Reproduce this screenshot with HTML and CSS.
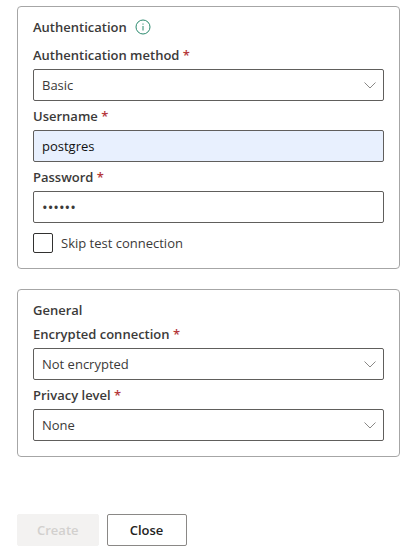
FILE: index.html
```html
<!DOCTYPE html>
<html lang="en">
<head>
  <meta charset="UTF-8">
  <meta name="viewport" content="width=device-width, initial-scale=1.0">
  <title>Connection</title>
  <link rel="stylesheet" href="styles.css">
</head>
<body>
  <form class="connection-form">
    <section class="card">
      <div class="card-header with-info">
        <h2>Authentication</h2>
        <svg class="info-icon" viewBox="0 0 16 16" aria-hidden="true">
          <circle cx="8" cy="8" r="7"/>
          <path d="M8 7v4.5M8 4.5v1.2"/>
        </svg>
      </div>

      <label class="field-label" for="authMethod">Authentication method <span class="required">*</span></label>
      <div class="select-box">
        <select class="field" id="authMethod">
          <option>Basic</option>
        </select>
        <svg class="chevron" viewBox="0 0 12 7" aria-hidden="true"><path d="M0.5 0.5L6 6L11.5 0.5"/></svg>
      </div>

      <label class="field-label" for="username">Username <span class="required">*</span></label>
      <input class="field filled" type="text" id="username" value="postgres">

      <label class="field-label" for="password">Password <span class="required">*</span></label>
      <input class="field password" type="password" id="password" value="secret">

      <div class="check-row">
        <input class="checkbox" type="checkbox" id="skipTest">
        <label for="skipTest">Skip test connection</label>
      </div>
    </section>

    <section class="card">
      <div class="card-header">
        <h2>General</h2>
      </div>

      <label class="field-label" for="encrypted">Encrypted connection <span class="required">*</span></label>
      <div class="select-box">
        <select class="field" id="encrypted">
          <option>Not encrypted</option>
        </select>
        <svg class="chevron" viewBox="0 0 12 7" aria-hidden="true"><path d="M0.5 0.5L6 6L11.5 0.5"/></svg>
      </div>

      <label class="field-label" for="privacy">Privacy level <span class="required">*</span></label>
      <div class="select-box">
        <select class="field" id="privacy">
          <option>None</option>
        </select>
        <svg class="chevron" viewBox="0 0 12 7" aria-hidden="true"><path d="M0.5 0.5L6 6L11.5 0.5"/></svg>
      </div>
    </section>

    <div class="actions">
      <button class="button create" type="submit" disabled>Create</button>
      <button class="button close" type="button">Close</button>
    </div>
  </form>
</body>
</html>
```

FILE: styles.css
```css
* {
  box-sizing: border-box;
}

body {
  margin: 0;
  background-color: #fff;
  color: #3b3a39;
  font-family: "Segoe UI", "Open Sans", "Noto Sans", sans-serif;
  font-size: 13px;
}

.connection-form {
  padding: 6px 2px 2px 17px;
}

.card {
  padding: 10px 15px 15px;
  margin-bottom: 20px;
  border: 1px solid #a6a6a6;
  border-radius: 4px;
}

.card-header {
  display: flex;
  align-items: center;
  gap: 8px;
  height: 19px;
}

.with-info {
  margin-bottom: 4px;
}

.card-header h2 {
  margin: 0;
  font-size: 13px;
  font-weight: 600;
}

.info-icon {
  width: 16px;
  height: 16px;
  fill: none;
  stroke: #2b8a6e;
}

.field-label {
  display: block;
  padding-top: 2px;
  line-height: 27px;
  font-weight: 600;
}

.required {
  color: #b5373b;
}

.field {
  display: block;
  width: 100%;
  height: 32px;
  padding: 0 8px;
  border: 1px solid #605e5c;
  border-radius: 2px;
  background-color: #fff;
  color: #3b3a39;
  font-family: inherit;
  font-size: 13px;
  appearance: none;
}

.filled {
  background-color: #e8f0fe;
  color: #111;
}

.password {
  font-size: 15px;
}

/* the chevron shares the select's grid cell */
.select-box {
  display: grid;
  align-items: center;
}

.select-box .field,
.chevron {
  grid-area: 1 / 1;
}

.chevron {
  justify-self: end;
  width: 12px;
  height: 7px;
  margin-right: 8px;
  fill: none;
  stroke: #8a8886;
  pointer-events: none;
}

.check-row {
  display: flex;
  align-items: center;
  gap: 8px;
  margin-top: 10px;
}

.checkbox {
  width: 20px;
  height: 20px;
  margin: 0;
  border: 1px solid #323130;
  border-radius: 2px;
  appearance: none;
}

.checkbox:checked {
  background-color: #117865;
}

.actions {
  display: flex;
  gap: 8px;
  margin-top: 57px;
}

.button {
  height: 32px;
  padding: 0 19px;
  min-width: 80px;
  border: 1px solid #8a8886;
  border-radius: 2px;
  background-color: #fff;
  color: #242322;
  font-family: inherit;
  font-size: 13px;
  font-weight: 600;
}

.create {
  border-color: #f3f2f1;
  background-color: #f3f2f1;
  color: #d2d0ce;
}
```
